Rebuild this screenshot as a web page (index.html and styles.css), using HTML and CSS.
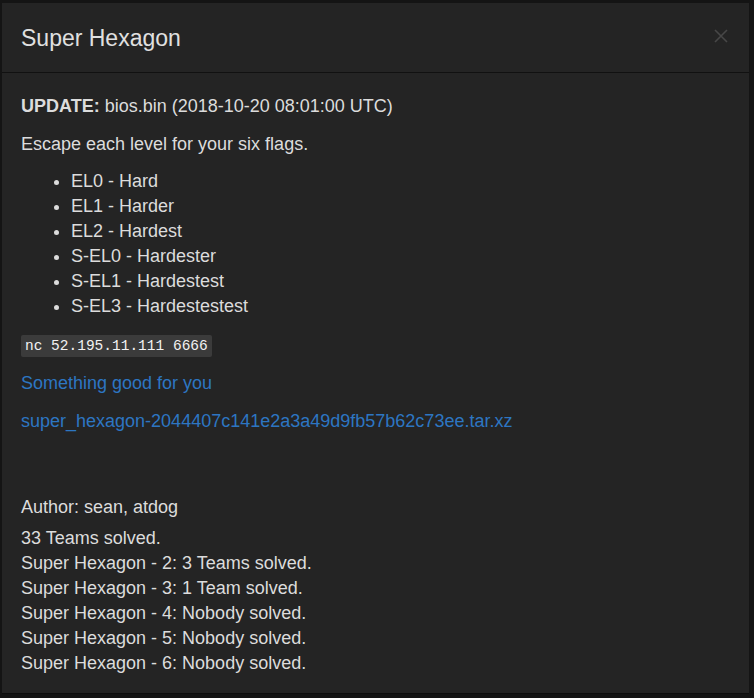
FILE: index.html
```html
<!DOCTYPE html>
<html>
<head>
<meta charset="utf-8">
<title>Super Hexagon</title>
<link rel="stylesheet" href="styles.css">
</head>
<body>
<div class="modal">
  <div class="modal-header">
    <h4 class="modal-title">Super Hexagon</h4>
    <button class="close" aria-label="Close">
      <svg width="14" height="14" viewBox="0 0 14 14"><path d="M1 1 L13 13 M13 1 L1 13" stroke="#474747" stroke-width="1.6" fill="none"/></svg>
    </button>
  </div>
  <div class="modal-body">
    <p><strong>UPDATE:</strong> bios.bin (2018-10-20 08:01:00 UTC)</p>
    <p>Escape each level for your six flags.</p>
    <ul class="levels">
      <li>EL0 - Hard</li>
      <li>EL1 - Harder</li>
      <li>EL2 - Hardest</li>
      <li>S-EL0 - Hardester</li>
      <li>S-EL1 - Hardestest</li>
      <li>S-EL3 - Hardestestest</li>
    </ul>
    <p><code>nc 52.195.11.111 6666</code></p>
    <p><a href="#">Something good for you</a></p>
    <p><a href="#">super_hexagon-2044407c141e2a3a49d9fb57b62c73ee.tar.xz</a></p>
    <p class="author">Author: sean, atdog</p>
    <div class="solves">
      <div>33 Teams solved.</div>
      <div>Super Hexagon - 2: 3 Teams solved.</div>
      <div>Super Hexagon - 3: 1 Team solved.</div>
      <div>Super Hexagon - 4: Nobody solved.</div>
      <div>Super Hexagon - 5: Nobody solved.</div>
      <div>Super Hexagon - 6: Nobody solved.</div>
    </div>
  </div>
</div>
</body>
</html>
```

FILE: styles.css
```css
html, body {
  margin: 0;
  padding: 0;
  background: #141414;
  height: 100%;
}
body {
  font-family: "Liberation Sans", Arial, sans-serif;
  color: #dcdcdc;
  padding: 3px 5px 0 2px;
  box-sizing: border-box;
}
.modal {
  background: #242424;
  width: 747px;
  height: 691px;
  box-sizing: border-box;
  border-bottom: 1px solid #0e0e0e;
}
.modal-header {
  display: flex;
  justify-content: space-between;
  align-items: center;
  padding: 19px 21px 17px 19px;
  border-bottom: 1px solid #111;
}
.modal-title {
  margin: 0;
  font-size: 23px;
  font-weight: normal;
  line-height: 33px;
  color: #e0e0e0;
}
.close {
  background: none;
  border: 0;
  padding: 0;
  margin-top: -5px;
  width: 14px;
  height: 14px;
  display: flex;
}
.modal-body {
  padding: 21px 19px 0 19px;
  font-size: 18px;
  line-height: 25px;
}
.modal-body p {
  margin: 0 0 12.5px 0;
}
.levels {
  margin: 0 0 12.5px 0;
  padding-left: 50px;
}
code {
  font-family: "Liberation Mono", "Courier New", monospace;
  font-size: 14.5px;
  background: #3b3b3b;
  color: #f2f2f2;
  padding: 3px 4px;
  border-radius: 2px;
}
a {
  color: #2d76c2;
  text-decoration: none;
}
.modal-body p.author {
  margin-top: 61px;
  margin-bottom: 6px;
}
```
